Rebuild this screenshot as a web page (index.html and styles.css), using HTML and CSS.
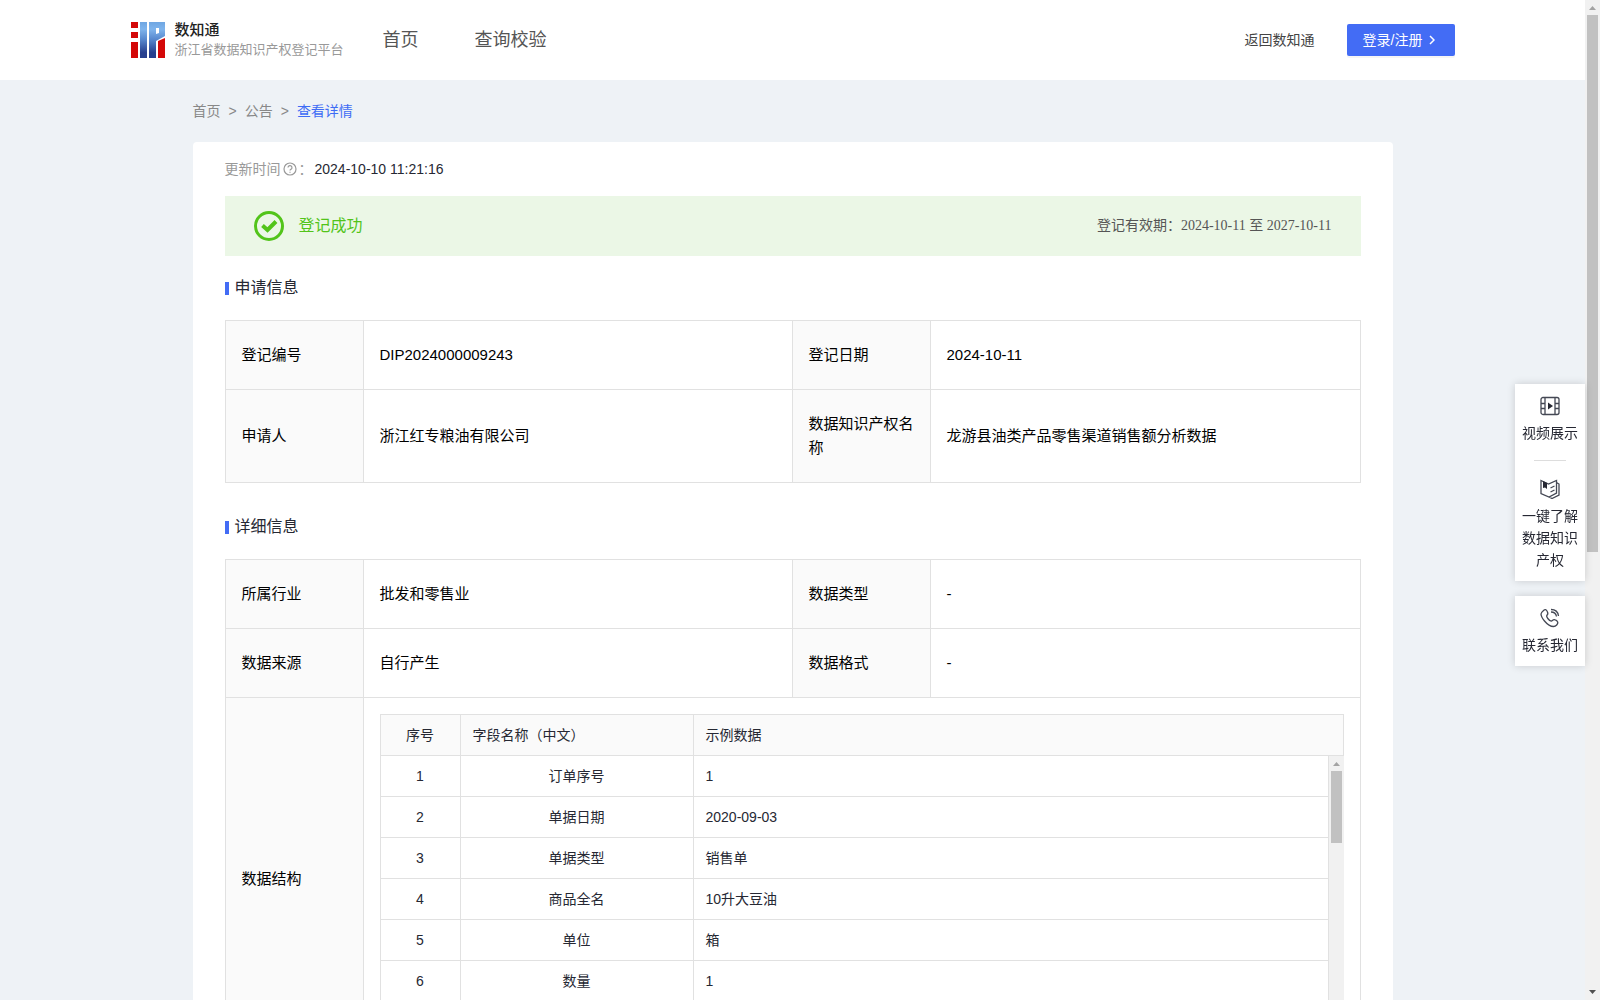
FILE: index.html
```
<!DOCTYPE html>
<html lang="zh-CN">
<head>
  <meta charset="UTF-8">
  <title>浙江省数据知识产权登记平台</title>
  <link rel="stylesheet" href="styles.css">
</head>
<body>
  <div class="page">
    <header class="header">
      <div class="header__inner">
        <a class="logo" href="#">
          <svg class="logo__mark" viewBox="0 0 34 36" aria-hidden="true">
            <defs>
              <linearGradient id="logoBlue" x1="0" y1="0" x2="0" y2="1">
                <stop offset="0" stop-color="#6fa6e2"/>
                <stop offset="0.2" stop-color="#7fb4ec"/>
                <stop offset="0.5" stop-color="#5585cc"/>
                <stop offset="0.85" stop-color="#27408f"/>
                <stop offset="1" stop-color="#27408f"/>
              </linearGradient>
            </defs>
            <path fill="#d40808" d="M0 0h7v6H0zM0 10h7v6H0zM0 20h7v16H0zM27 19l7-3v20h-7z"/>
            <path fill="url(#logoBlue)" d="M9 0h7v36H9zM18 0h16v14l-9 5v17h-7zM25 6v6l3-1V6z" fill-rule="evenodd"/>
          </svg>
          <span class="logo__text">
            <strong class="logo__name">数知通</strong>
            <span class="logo__sub">浙江省数据知识产权登记平台</span>
          </span>
        </a>
        <nav class="nav">
          <a href="#">首页</a>
          <a href="#">查询校验</a>
        </nav>
        <div class="header__right">
          <a class="back" href="#">返回数知通</a>
          <button class="login" type="button">登录/注册
            <svg class="login__arrow" viewBox="0 0 6 10" aria-hidden="true"><path d="M1 1l4 4-4 4"/></svg>
          </button>
        </div>
      </div>
    </header>

    <main class="container">
      <nav class="breadcrumb">
        <a href="#">首页</a><span>&gt;</span><a href="#">公告</a><span>&gt;</span><a class="breadcrumb__current" href="#">查看详情</a>
      </nav>

      <div class="card">
        <div class="update">
          <span class="update__label">更新时间</span>
          <svg class="update__help" viewBox="0 0 14 14" aria-hidden="true">
            <circle cx="7" cy="7" r="6"/>
            <path d="M5 5.600a2 2 0 1 1 2.900 1.800c-.6.300-.9.600-.9 1.200M7 9.800v1"/>
          </svg>
          <span class="update__label">：</span>
          <span class="update__time">2024-10-10 11:21:16</span>
        </div>

        <div class="status">
          <svg class="status__icon" viewBox="0 0 30 30" aria-hidden="true">
            <circle cx="15" cy="15" r="13.500"/>
            <path d="M8.500 14.500l5 4.500 8.500-8.500"/>
          </svg>
          <span class="status__text">登记成功</span>
          <span class="status__period">登记有效期：2024-10-11 至 2027-10-11</span>
        </div>

        <h2 class="title">申请信息</h2>
        <table class="info">
          <colgroup><col class="info__key"><col class="info__val"><col class="info__key"><col></colgroup>
          <tr>
            <th>登记编号</th><td>DIP2024000009243</td>
            <th>登记日期</th><td>2024-10-11</td>
          </tr>
          <tr>
            <th>申请人</th><td>浙江红专粮油有限公司</td>
            <th>数据知识产权名称</th><td>龙游县油类产品零售渠道销售额分析数据</td>
          </tr>
        </table>

        <h2 class="title">详细信息</h2>
        <table class="info">
          <colgroup><col class="info__key"><col class="info__val"><col class="info__key"><col></colgroup>
          <tr>
            <th>所属行业</th><td>批发和零售业</td>
            <th>数据类型</th><td>-</td>
          </tr>
          <tr>
            <th>数据来源</th><td>自行产生</td>
            <th>数据格式</th><td>-</td>
          </tr>
          <tr>
            <th>数据结构</th>
            <td class="info__wide" colspan="3">
              <div class="fields">
                <table class="fields__table">
                  <colgroup><col class="fields__no"><col class="fields__name"><col></colgroup>
                  <thead>
                    <tr><th>序号</th><th>字段名称（中文）</th><th>示例数据</th></tr>
                  </thead>
                </table>
                <div class="fields__body">
                  <div class="fields__rows">
                    <table class="fields__table">
                      <colgroup><col class="fields__no"><col class="fields__name"><col></colgroup>
                      <tbody>
                        <tr><td>1</td><td>订单序号</td><td>1</td></tr>
                        <tr><td>2</td><td>单据日期</td><td>2020-09-03</td></tr>
                        <tr><td>3</td><td>单据类型</td><td>销售单</td></tr>
                        <tr><td>4</td><td>商品全名</td><td>10升大豆油</td></tr>
                        <tr><td>5</td><td>单位</td><td>箱</td></tr>
                        <tr><td>6</td><td>数量</td><td>1</td></tr>
                      </tbody>
                    </table>
                  </div>
                  <div class="scrollbar" aria-hidden="true">
                    <svg class="scrollbar__arrow" viewBox="0 0 15 15"><path d="M4 10l3.500-4L11 10z"/></svg>
                    <div class="scrollbar__thumb scrollbar__thumb--fields"></div>
                  </div>
                </div>
              </div>
            </td>
          </tr>
        </table>
      </div>
    </main>

    <aside class="side">
      <div class="side__box">
        <a class="side__item" href="#">
          <svg class="side__icon" viewBox="0 0 20 20" aria-hidden="true">
            <rect x="1" y="1.500" width="18" height="17" rx="2"/>
            <path d="M5 2v16M15 2v16M1 7.500h4M1 12.500h4M15 7.500h4M15 12.500h4"/>
            <path class="solid" d="M8 6.500l5 3.500-5 3.500z"/>
          </svg>
          视频展示
        </a>
        <a class="side__item" href="#">
          <svg class="side__icon" viewBox="0 0 20 20" aria-hidden="true">
            <path d="M1 1.500L8.500 5 16.500 1.500V14L9 18l-8-3.500zM16.500 3.500L19 5v11l-7 3.500-3-1.500"/>
            <path d="M10.500 9l4-2M10.500 13l4-2"/>
            <path class="solid" d="M3 2l4 2v6L5 8.500 3 9z"/>
          </svg>
          一键了解数据知识产权
        </a>
      </div>
      <div class="side__box">
        <a class="side__item" href="#">
          <svg class="side__icon" viewBox="0 0 20 20" aria-hidden="true">
            <path d="M3.500 2.500c1.500-1.300 2.500-1 3.500.5 1.500 2.300 1.300 3 0 4.300-.8.800-.5 1.500.8 3.200s2.500 2.800 3.500 2.700c1-.2 1.500-1.700 3-1.500s3.200 1.500 3.500 2.500c.3 1.600-1.800 4.300-4.300 4.300-3 0-6.500-2.500-9-5.500S1 7.500 1 6s1.300-2.500 2.500-3.500z"/>
            <path d="M11 1.500c4.500 0 7 2.500 7.500 6.500M11 4c3 0 5 1.500 5.500 4.500"/>
          </svg>
          联系我们
        </a>
      </div>
    </aside>
  </div>

  <div class="scrollbar" aria-hidden="true">
    <svg class="scrollbar__arrow" viewBox="0 0 15 15"><path d="M4 10l3.500-4L11 10z"/></svg>
    <div class="scrollbar__thumb scrollbar__thumb--page"></div>
    <svg class="scrollbar__arrow scrollbar__arrow--down" viewBox="0 0 15 15"><path d="M4 5l3.500 4L11 5z"/></svg>
  </div>
</body>
</html>
```
FILE: styles.css
```
* {
  box-sizing: border-box;
}

body {
  display: flex;
  height: 100vh;
  margin: 0;
  background: #eef2f6;
  color: #262833;
  font-family: "Liberation Sans", "Noto Sans CJK SC", sans-serif;
  font-size: 14px;
  line-height: 22px;
}

a {
  color: inherit;
  text-decoration: none;
}

table {
  width: 100%;
  border-collapse: collapse;
  table-layout: fixed;
}

th {
  font-weight: normal;
  text-align: left;
}

.page {
  flex: 1;
  min-width: 0;
  overflow-y: auto;
  scrollbar-width: none;
}

/* Scrollbars */
.scrollbar {
  display: flex;
  flex: none;
  flex-direction: column;
  width: 15px;
  background: #f1f1f1;
}

.scrollbar__arrow {
  flex: none;
  width: 15px;
  height: 15px;
  fill: #a3a3a3;
}

.scrollbar__arrow--down {
  margin-top: auto;
  fill: #505050;
}

.scrollbar__thumb {
  margin: 0 2px;
  background: #c1c1c1;
}

.scrollbar__thumb--page {
  height: 53.7%;
}

.scrollbar__thumb--fields {
  height: 25%;
}

/* Header */
.header {
  background: #fff;
}

.header__inner {
  display: flex;
  align-items: center;
  max-width: 1324px;
  height: 80px;
  margin: 0 auto;
}

.logo {
  display: flex;
  align-items: center;
  gap: 10px;
  width: 252px;
}

.logo__mark {
  width: 34px;
  height: 36px;
}

.logo__text {
  display: flex;
  flex-direction: column;
  line-height: 20px;
  white-space: nowrap;
}

.logo__name {
  color: #222;
  font-size: 15px;
  font-weight: 500;
}

.logo__sub {
  color: #999;
  font-size: 13px;
}

.nav {
  display: flex;
  gap: 56px;
  color: #555;
  font-size: 18px;
}

.header__right {
  display: flex;
  align-items: center;
  gap: 32px;
  margin-left: auto;
  color: #444;
}

.login {
  display: flex;
  align-items: center;
  gap: 7px;
  width: 108px;
  height: 32px;
  padding: 0 16px;
  border: 0;
  border-radius: 2px;
  background: #436cf5;
  box-shadow: 0 2px 0 rgba(0, 0, 0, 0.04);
  color: #fff;
  font: inherit;
  white-space: nowrap;
  cursor: pointer;
}

.login__arrow {
  width: 6px;
  height: 10px;
  fill: none;
  stroke: #fff;
  stroke-width: 1.5;
}

/* Content */
.container {
  max-width: 1200px;
  margin: 0 auto;
}

.breadcrumb {
  display: flex;
  gap: 8px;
  padding: 20px 0;
  color: #888;
}

.breadcrumb__current {
  color: #3e6cf5;
}

.card {
  padding: 16px 32px 32px;
  border-radius: 4px;
  background: #fff;
}

.update {
  display: flex;
  align-items: center;
  margin-bottom: 16px;
}

.update__label {
  color: #999;
}

.update__help {
  width: 14px;
  height: 14px;
  margin: 0 2px;
  fill: none;
  stroke: #999;
  stroke-width: 1.2;
}

.update__time {
  margin-left: 2px;
}

.status {
  display: flex;
  align-items: center;
  height: 60px;
  padding: 0 29px;
  background: #ebf7e6;
}

.status__icon {
  width: 30px;
  height: 30px;
  fill: none;
  stroke: #52c41a;
  stroke-width: 3;
}

.status__icon path {
  stroke-width: 4;
}

.status__text {
  margin-left: 15px;
  color: #52c41a;
  font-size: 16px;
}

.status__period {
  margin-left: auto;
  color: #555;
  font-family: "Liberation Serif", "Noto Sans CJK SC", serif;
}

.title {
  display: flex;
  align-items: center;
  gap: 6px;
  margin: 0;
  padding: 20px 0;
  font-size: 16px;
  font-weight: normal;
  line-height: 24px;
}

.title::before {
  content: "";
  width: 4px;
  height: 13px;
  background: #436cf5;
}

.info {
  margin-bottom: 12px;
  color: #000;
  font-size: 15px;
  line-height: 24px;
}

.info__key {
  width: 138px;
}

.info__val {
  width: 429px;
}

.info th,
.info td {
  padding: 22px 16px;
  border: 1px solid #e1e1e1;
}

.info th {
  background: #fafafa;
}

.info .info__wide {
  padding: 16px;
}

/* Field list */
.fields {
  color: #262833;
}

.fields__no {
  width: 80px;
}

.fields__name {
  width: 233px;
}

.fields .fields__table {
  font-size: 14px;
  line-height: 20px;
}

.fields .fields__table th,
.fields .fields__table td {
  padding: 10px 12px;
  text-align: center;
}

.fields .fields__table th + th,
.fields .fields__table td:last-child {
  text-align: left;
}

.fields .fields__body td {
  border-top: 0;
}

.fields__body {
  display: flex;
  height: 287px;
}

.fields__rows {
  flex: 1;
  overflow-y: auto;
  scrollbar-width: none;
}

/* Floating links */
.side {
  position: fixed;
  top: 384px;
  right: 15px;
  width: 70px;
}

.side__box {
  margin-bottom: 15px;
  padding: 0 7px;
  background: #fff;
  box-shadow: 0 0 8px rgba(0, 0, 0, 0.16);
}

.side__item {
  display: block;
  padding: 12px 0 10px;
  text-align: center;
}

.side__item + .side__item {
  padding-top: 6px;
}

.side__item + .side__item::before {
  content: "";
  display: block;
  width: 32px;
  margin: 0 auto 18px;
  border-top: 1px solid #ddd;
}

.side__icon {
  display: block;
  width: 20px;
  height: 20px;
  margin: 0 auto 6px;
  fill: none;
  stroke: #444854;
  stroke-width: 1.3;
}

.side__icon .solid {
  fill: #262833;
  stroke: none;
}
```
